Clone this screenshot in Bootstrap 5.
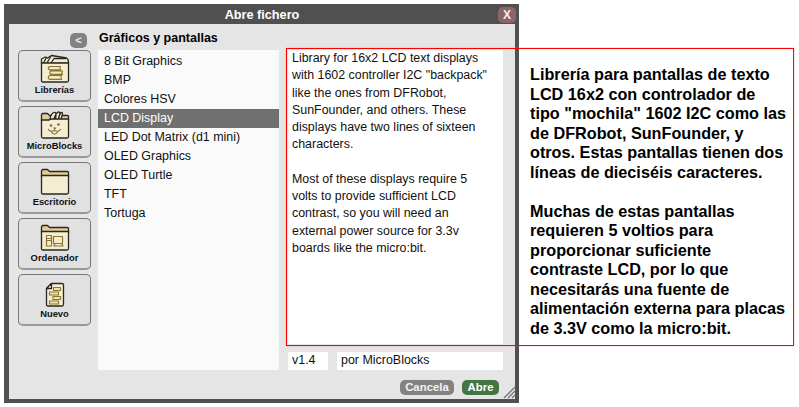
<!DOCTYPE html>
<html lang="es">
<head>
<meta charset="utf-8">
<meta name="viewport" content="width=device-width, initial-scale=1">
<title>Abre fichero</title>
<link href="https://cdn.jsdelivr.net/npm/bootstrap@5.3.0/dist/css/bootstrap.min.css" rel="stylesheet">
<style>
body{font-family:"Liberation Sans",Arial,sans-serif;font-size:12.45px;line-height:19px;color:#111;width:799px;height:407px}
.dialog{width:515px;height:399px;margin:4px 0 0 4px;background:#e5e5e5;border:solid #505050;border-width:0 4px 4px 5px}
.titlebar{height:20px;background:#505050;color:#fff;font-size:12.7px;line-height:22px}
.close-x{top:3px;right:-1px;width:18px;height:16px;border-radius:5px;background:#8f6464;color:#f5eded;font-size:12px;line-height:16px}
.dialog-body{height:346px;padding:0 12px 0 9px}
.side{width:73px;margin-right:7px}
.back{width:17px;height:15px;margin:9px 4px 2px auto;border-radius:5px;background:#828282;color:#eee;font-size:11px;line-height:15px}
.place{width:73px;height:52px;border:1px solid #777;border-bottom:2px solid #999;border-radius:5px;background:#e1e1e1;padding:3px 0 0;font-size:9.35px;line-height:13px;color:#111}
.place svg{width:30px;height:30px;flex:none}
.files{width:181px;margin-right:9px}
.heading{height:26px;font-size:12.5px;line-height:29px;color:#000;padding-left:1px}
.file-list{height:320px;background:#fafafa;padding-top:2px}
.file{height:19px;padding-left:6px;line-height:19px;white-space:nowrap}
.file.selected{background:#707070;color:#fff}
.info{width:215px;padding-top:26px}
.about{height:294px;background:#fff;padding:0 0 0 4px;line-height:17.25px;font-size:12.42px;white-space:nowrap}
.about p{margin-bottom:17.25px}
.field{height:18px;background:#fff;line-height:17px;padding-left:4px}
.version{width:40px;margin-right:9px}
.action{height:15px;border-radius:5px;font-size:11.4px;line-height:15px;color:#fff}
.actions{padding-top:10px}
.cancel{width:54px;background:#828282;color:#f2f2f2}
.open{width:37px;background:#427542}
.grip{right:-1px;bottom:0;width:14px;height:14px}
.note-frame{left:286px;top:48px;width:508px;height:298px;border:1px solid #f00;box-shadow:0 0 1px #f77}
.note{width:265px;margin:65px 0 0 11px;font-size:16.23px;line-height:19.5px;color:#000;white-space:nowrap}
.note p{margin-bottom:19.5px}
</style>
</head>
<body class="bg-white position-relative overflow-hidden">
<div class="d-flex">
<main class="dialog position-relative flex-shrink-0">
  <header class="titlebar position-relative text-center fw-bold">Abre fichero<span class="close-x position-absolute">X</span></header>
  <div class="dialog-body d-flex">
    <nav class="side flex-shrink-0">
      <div class="back text-center fw-bold">&lt;</div>
      <div class="d-flex flex-column gap-1">
        <div class="place d-flex flex-column align-items-center fw-bold">
          <svg viewBox="0 0 30 30" fill="#f5edd2" stroke="#292721" stroke-width="1.3" stroke-linejoin="round"><path d="M1.500 10V5l4-2 2 1 4-2.500 9 1.500 6 1q2 1 2 5z"/><path d="M3.500 9l3-5.500M7 9l4-7M11 9l3-4.500 12 0" fill="none"/><path d="M1.500 9h27v17.500q0 1.500-1.500 1.500H3q-1.500 0-1.500-1.500z"/><path d="M21 12.500H9.500q-2.500 1.700 0 3.400H20.500q-1.200-1.700 0-3.400M23 17H11q-2.500 1.700 0 3.400H22.500q-1.200-1.700 0-3.400M22 21.500H9.500q-2.500 1.900 0 3.800H21.500q-1.200-1.900 0-3.800" fill="#f3e9c2" stroke="#8b7630" stroke-width="1.200"/></svg>Librerías</div>
        <div class="place d-flex flex-column align-items-center fw-bold">
          <svg viewBox="0 0 30 30" fill="#f5edd2" stroke="#292721" stroke-width="1.3" stroke-linejoin="round"><path d="M1.500 11V4.500l1-1h5l2 2h18q1 0 1 1V11z" fill="#dfcc96"/><path d="M10 9q1-5.500 4-6.500t1.500 6.500M14 9q2-6.500 4.500-7t0 7M18.500 9q1-6 3-6.500t-.5 6.500"/><path d="M1.500 10v16.500q0 1.500 1.500 1.500h24q1.500 0 1.500-1.500V9H12q-2 0-3 1z"/><path d="M8 19q2 3.500 6.500 1.500q4 2 6.500-1.500M11 21.500q3.500 5 7 0" fill="none" stroke="#806a30" stroke-width="1.100"/><g fill="#806a30" stroke="none"><circle cx="11" cy="15.500" r="1.300"/><circle cx="18.500" cy="14.500" r="1.300"/><path d="M13 17.500h3.500l-1.700 2.500z"/></g></svg>MicroBlocks</div>
        <div class="place d-flex flex-column align-items-center fw-bold">
          <svg viewBox="0 0 30 30" fill="#f5edd2" stroke="#292721" stroke-width="1.3" stroke-linejoin="round"><path d="M1.500 11V4.500l1-1h5l2 2h18q1 0 1 1V11z" fill="#dfcc96"/><path d="M1.500 9.500h27v17q0 1.500-1.500 1.500H3q-1.500 0-1.500-1.500z"/></svg>Escritorio</div>
        <div class="place d-flex flex-column align-items-center fw-bold">
          <svg viewBox="0 0 30 30" fill="#f5edd2" stroke="#292721" stroke-width="1.3" stroke-linejoin="round"><path d="M1.500 11V4.500l1-1h5l2 2h18q1 0 1 1V11z" fill="#dfcc96"/><path d="M1.500 9.500h27v17q0 1.500-1.500 1.500H3q-1.500 0-1.500-1.500z"/><path d="M6.500 13.500h5v10.500h-5zM6.500 16.500h5M6.500 18.500h5M13.500 14.500h9v7h-9zM14 24l1-2.500h6.500l1.500 2.500z" stroke="#8b7630" stroke-width="1.200"/></svg>Ordenador</div>
        <div class="place d-flex flex-column align-items-center fw-bold">
          <svg viewBox="0 0 30 30" fill="#f5edd2" stroke="#292721" stroke-width="1.3" stroke-linejoin="round"><path d="M11.500 5.500h10.500q1.500 0 1.500 1.500v19.500q0 1.500-1.500 1.500h-14q-1.500 0-1.500-1.500V10.500z"/><path d="M11.500 5.500v5h-5z" fill="#fff"/><path d="M13.500 9.500h7v3h-7zM9.500 14h9v3h-9zM13 18.500h7.500v3h-7.500zM9.500 23h9v3h-9z" fill="#efe3ae" stroke="#8b7630" stroke-width="1.100"/></svg>Nuevo</div>
      </div>
    </nav>
    <section class="files flex-shrink-0">
      <div class="heading fw-bold">Gráficos y pantallas</div>
      <div class="file-list">
        <div class="file">8 Bit Graphics</div>
        <div class="file">BMP</div>
        <div class="file">Colores HSV</div>
        <div class="file selected">LCD Display</div>
        <div class="file">LED Dot Matrix (d1 mini)</div>
        <div class="file">OLED Graphics</div>
        <div class="file">OLED Turtle</div>
        <div class="file">TFT</div>
        <div class="file">Tortuga</div>
      </div>
    </section>
    <section class="info flex-shrink-0">
      <div class="about mb-2">
        <p>Library for 16x2 LCD text displays<br>with 1602 controller I2C "backpack"<br>like the ones from DFRobot,<br>SunFounder, and others. These<br>displays have two lines of sixteen<br>characters.</p>
        <p>Most of these displays require 5<br>volts to provide sufficient LCD<br>contrast, so you will need an<br>external power source for 3.3v<br>boards like the micro:bit.</p>
      </div>
      <div class="d-flex">
        <div class="field version">v1.4</div>
        <div class="field flex-fill">por MicroBlocks</div>
      </div>
    </section>
  </div>
  <footer class="actions d-flex justify-content-end gap-2 pe-3 text-center fw-bold"><div class="action cancel">Cancela</div><div class="action open">Abre</div></footer>
  <svg class="grip position-absolute" viewBox="0 0 14 14" stroke="#777" stroke-width="1.3" fill="none"><path d="M2 13L13 2M6 13l7-7M10 13l3-3"/></svg>
</main>
<aside class="note fw-bold">
  <p>Librería para pantallas de texto<br>LCD 16x2 con controlador de<br>tipo "mochila" 1602 I2C como las<br>de DFRobot, SunFounder, y<br>otros. Estas pantallas tienen dos<br>líneas de dieciséis caracteres.</p>
  <p>Muchas de estas pantallas<br>requieren 5 voltios para<br>proporcionar suficiente<br>contraste LCD, por lo que<br>necesitarás una fuente de<br>alimentación externa para placas<br>de 3.3V como la micro:bit.</p>
</aside>
</div>
<div class="note-frame position-absolute"></div>
<script src="https://cdn.jsdelivr.net/npm/bootstrap@5.3.0/dist/js/bootstrap.bundle.min.js"></script>
</body>
</html>
